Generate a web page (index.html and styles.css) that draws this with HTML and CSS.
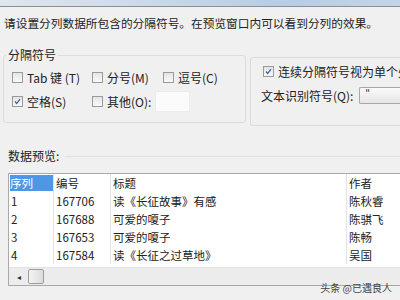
FILE: index.html
```html
<!DOCTYPE html>
<html lang="zh-CN">
<head>
    <meta charset="UTF-8">
    <title>文本分列向导</title>
    <link rel="stylesheet" href="styles.css">
</head>
<body>
    <div class="titlebar"></div>
    <p class="intro">请设置分列数据所包含的分隔符号。在预览窗口内可以看到分列的效果。</p>

    <div class="groups">
        <fieldset class="group-left">
            <legend>分隔符号</legend>
            <div class="opts">
                <label class="opt"><span class="box"></span>Tab 键 (T)</label>
                <label class="opt"><span class="box"></span>分号(M)</label>
                <label class="opt"><span class="box"></span>逗号(C)</label>
                <label class="opt"><span class="box checked"><svg viewBox="0 0 11 11"><path d="M2.5 5.5 L4.5 8 L8.5 2.5" /></svg></span>空格(S)</label>
                <label class="opt opt-wide"><span class="box"></span>其他(O):<span class="other-input"></span></label>
            </div>
        </fieldset>
        <div class="group-right">
            <label class="opt"><span class="box checked"><svg viewBox="0 0 11 11"><path d="M2.5 5.5 L4.5 8 L8.5 2.5" /></svg></span><span class="clip">连续分隔符号视为单个处</span></label>
            <div class="qualifier">文本识别符号(Q):<span class="select">"</span></div>
        </div>
    </div>

    <div class="preview-head"><span>数据预览:</span></div>

    <div class="preview">
        <table class="grid">
            <tr>
                <td class="c1"><span class="sel">序列</span></td>
                <td class="c2">编号</td>
                <td class="c3">标题</td>
                <td class="c4">作者</td>
            </tr>
            <tr><td class="c1">1</td><td class="c2">167706</td><td class="c3">读《长征故事》有感</td><td class="c4">陈秋睿</td></tr>
            <tr><td class="c1">2</td><td class="c2">167688</td><td class="c3">可爱的嗄子</td><td class="c4">陈骐飞</td></tr>
            <tr><td class="c1">3</td><td class="c2">167653</td><td class="c3">可爱的嗄子</td><td class="c4">陈畅</td></tr>
            <tr><td class="c1">4</td><td class="c2">167584</td><td class="c3">读《长征之过草地》</td><td class="c4">吴国</td></tr>
        </table>
        <div class="hscroll">
            <span class="arrow">&#9666;</span>
            <span class="thumb"></span>
        </div>
    </div>

    <div class="watermark">头条 @已遇良人</div>
</body>
</html>
```

FILE: styles.css
```css
body {
    margin: 0;
    width: 400px;
    height: 300px;
    overflow: hidden;
    position: relative;
    background: #f0f0f0;
    font-family: "Noto Sans CJK SC", "DejaVu Sans", sans-serif;
    font-size: 12px;
    color: #222;
}
.titlebar {
    height: 6px;
    background: linear-gradient(to right, #dfe6ee, #c9d8e8 40%, #b7cde4 70%, #c3d5e8);
    border-bottom: 1px solid #8e8e8e;
}
.intro {
    margin: 8px 0 0 4px;
    line-height: 16px;
    font-size: 11.7px;
    white-space: nowrap;
}
.groups {
    display: flex;
    gap: 4px;
    margin-top: 16px;
    margin-left: 3px;
}
.group-left {
    margin: 0;
    width: 233px;
    height: 70px;
    padding: 4px 0 0 8px;
    border: 1px solid #dcdcdc;
    border-radius: 3px;
}
.group-left legend {
    padding: 0 2px;
    margin-left: -6px;
    line-height: 16px;
}
.opts {
    display: grid;
    grid-template-columns: 80px 71px 70px;
    row-gap: 8px;
    margin-top: 2px;
}
.opt {
    display: flex;
    align-items: center;
    height: 16px;
    white-space: nowrap;
}
.opt-wide {
    grid-column: span 2;
}
.box {
    width: 9px;
    height: 9px;
    border: 1px solid #9a9a9a;
    background: linear-gradient(#e4e4e4, #fafafa);
    margin-right: 4px;
    flex-shrink: 0;
    display: flex;
}
.box svg {
    width: 9px;
    height: 9px;
}
.box path {
    fill: none;
    stroke: #3c5fa8;
    stroke-width: 1.6;
}
.other-input {
    width: 33px;
    height: 19px;
    margin-left: 4px;
    background: #fbfbfb;
    border: 1px solid #ececec;
}
.group-right {
    flex: 1;
    height: 62px;
    margin-top: 10px;
    padding: 5px 0 0 12px;
    border: 1px solid #dcdcdc;
    border-right: none;
    border-radius: 3px 0 0 3px;
    display: flex;
    flex-direction: column;
    gap: 8px;
    white-space: nowrap;
    overflow: hidden;
}
.clip {
    overflow: hidden;
}
.qualifier {
    display: flex;
    align-items: center;
    height: 16px;
    margin-left: -2px;
}
.select {
    margin-left: 6px;
    flex: 1;
    height: 15px;
    line-height: 12px;
    padding-left: 5px;
    border: 1px solid #a8a8a8;
    border-right: none;
    border-radius: 2px 0 0 2px;
    background: linear-gradient(#fafafa, #e6e6e6);
    font-size: 10px;
}
.preview-head {
    display: flex;
    align-items: center;
    margin: 22px 0 0 8px;
    line-height: 16px;
}
.preview-head::after {
    content: '';
    flex: 1;
    margin-left: 6px;
    border-top: 1px solid #e0e0e0;
}
.preview {
    margin: 9px 0 0 8px;
    height: 111px;
    border: 1px solid #a9a9a9;
    border-right: none;
    background: #fff;
    display: flex;
    flex-direction: column;
}
.grid {
    border-collapse: collapse;
    width: 400px;
    font-size: 11.5px;
}
.grid td {
    height: 18px;
    padding: 0 0 0 2px;
    line-height: 18px;
    white-space: nowrap;
    vertical-align: middle;
}
.c1 { width: 42px; border-right: 1px solid #e3e3e3; }
.c2 { width: 54px; border-right: 1px solid #e3e3e3; }
.c3 { width: 233px; border-right: 1px solid #e3e3e3; }
.sel {
    display: block;
    margin: 1px 0 1px -1px;
    width: 43px;
    line-height: 16px;
    background: #4e97e6;
    color: #fff;
}
.hscroll {
    margin-top: auto;
    height: 17px;
    background: #ececec;
    border-top: 1px solid #e2e2e2;
    display: flex;
    align-items: center;
}
.arrow {
    font-size: 8px;
    color: #333;
    margin-left: 8px;
    width: 11px;
}
.thumb {
    width: 14px;
    height: 13px;
    border: 1px solid #9c9c9c;
    border-radius: 2px;
    background: linear-gradient(to right, #f4f4f4, #dcdcdc);
}
.watermark {
    position: absolute;
    right: 8px;
    top: 281px;
    font-size: 10px;
    line-height: 14px;
    color: #444;
}
```
